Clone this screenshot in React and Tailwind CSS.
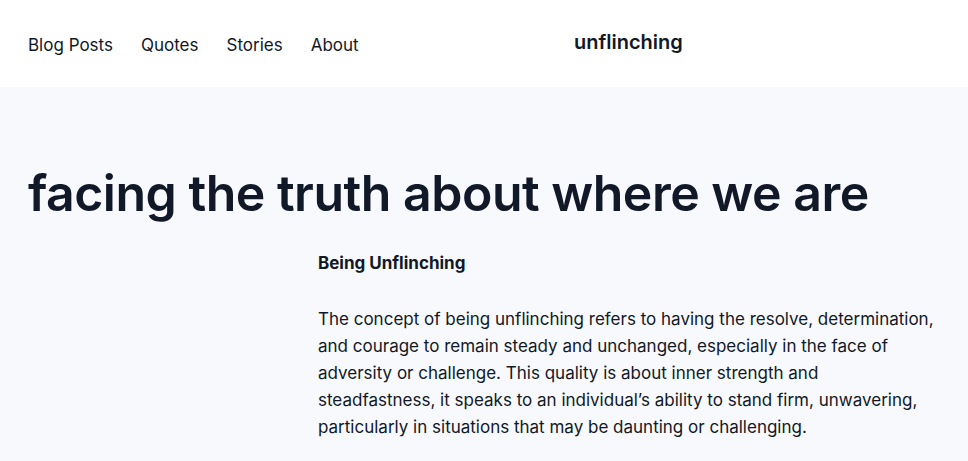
export default function App() {
  return (
    <div className="min-h-screen bg-[#f8f9fc] text-[#111827] font-['Inter',sans-serif]">
      <header className="flex h-[87px] items-center bg-white px-7">
        <nav className="flex w-[546px] items-center gap-7 pt-[5px] text-[17px]">
          <a href="#">Blog Posts</a>
          <a href="#">Quotes</a>
          <a href="#">Stories</a>
          <a href="#">About</a>
        </nav>
        <div className="mb-[3px] text-[20px] font-semibold">unflinching</div>
      </header>
      <main className="px-7 pt-[76px]">
        <h1 className="text-[50px] font-semibold leading-[60px] tracking-[-0.01em]">
          facing the truth about where we are
        </h1>
        <div className="mt-[28px] pl-[290px]">
          <h2 className="text-[17px] font-bold leading-6">Being Unflinching</h2>
          <p className="mt-[31px] max-w-[626px] text-[17px] leading-[27px]">
            The concept of being unflinching refers to having the resolve, determination, and courage to remain steady and unchanged, especially in the face of adversity or challenge. This quality is about inner strength and steadfastness, it speaks to an individual’s ability to stand firm, unwavering, particularly in situations that may be daunting or challenging.
          </p>
        </div>
      </main>
    </div>
  );
}
